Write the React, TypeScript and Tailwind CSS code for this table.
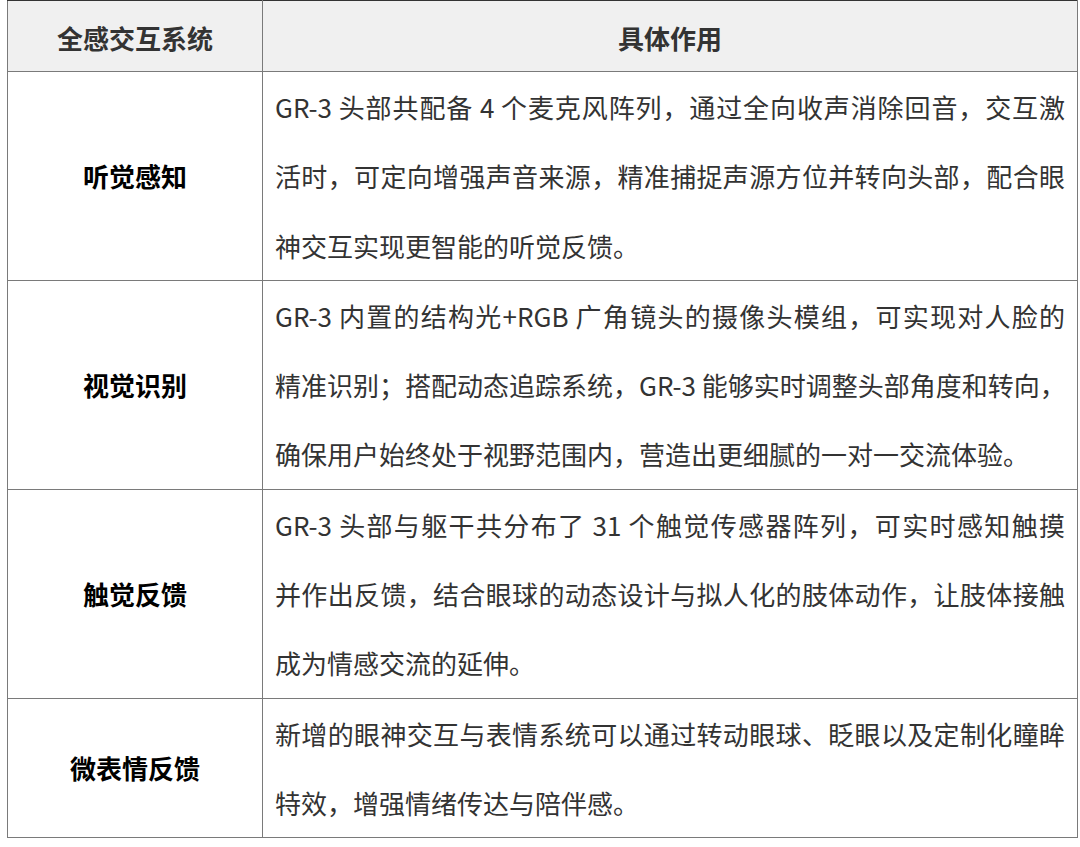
// 每行按原图断行
const rows = [
  {
    name: '听觉感知',
    lines: [
      'GR-3 头部共配备 4 个麦克风阵列，通过全向收声消除回音，交互激',
      '活时，可定向增强声音来源，精准捕捉声源方位并转向头部，配合眼',
      '神交互实现更智能的听觉反馈。',
    ],
  },
  {
    name: '视觉识别',
    lines: [
      'GR-3 内置的结构光+RGB 广角镜头的摄像头模组，可实现对人脸的',
      '精准识别；搭配动态追踪系统，GR-3 能够实时调整头部角度和转向，',
      '确保用户始终处于视野范围内，营造出更细腻的一对一交流体验。',
    ],
  },
  {
    name: '触觉反馈',
    lines: [
      'GR-3 头部与躯干共分布了 31 个触觉传感器阵列，可实时感知触摸',
      '并作出反馈，结合眼球的动态设计与拟人化的肢体动作，让肢体接触',
      '成为情感交流的延伸。',
    ],
  },
  {
    name: '微表情反馈',
    lines: [
      '新增的眼神交互与表情系统可以通过转动眼球、眨眼以及定制化瞳眸',
      '特效，增强情绪传达与陪伴感。',
    ],
  },
];

export default function App() {
  return (
    <div className="min-h-screen bg-white pl-[7px] font-['Noto_Sans_CJK_SC',sans-serif]">
      <table className="w-[1071px] table-fixed border-collapse border border-[#7a7a7a]">
        <colgroup>
          <col className="w-[255px]" />
          <col />
        </colgroup>
        <thead>
          {/* 表头 */}
          <tr className="h-[71px] bg-[#f0f0f0]">
            <th className="border border-[#7a7a7a] border-t-[#333] pt-[2px] text-center text-[26px] font-bold text-[#333]">
              全感交互系统
            </th>
            <th className="border border-[#7a7a7a] border-t-[#333] pt-[2px] text-center text-[26px] font-bold text-[#333]">
              具体作用
            </th>
          </tr>
        </thead>
        <tbody>
          {rows.map((r) => (
            <tr key={r.name}>
              <td className="border border-[#7a7a7a] text-center text-[26px] font-bold text-black">
                {r.name}
              </td>
              <td className="border border-[#7a7a7a] px-3 text-[26px] leading-[69.3px] text-[#333]">
                {r.lines.map((line, i) => (
                  <div
                    key={i}
                    className={
                      i < r.lines.length - 1
                        ? 'whitespace-nowrap text-justify [text-align-last:justify]'
                        : 'whitespace-nowrap text-left'
                    }
                  >
                    {line}
                  </div>
                ))}
              </td>
            </tr>
          ))}
        </tbody>
      </table>
    </div>
  );
}
